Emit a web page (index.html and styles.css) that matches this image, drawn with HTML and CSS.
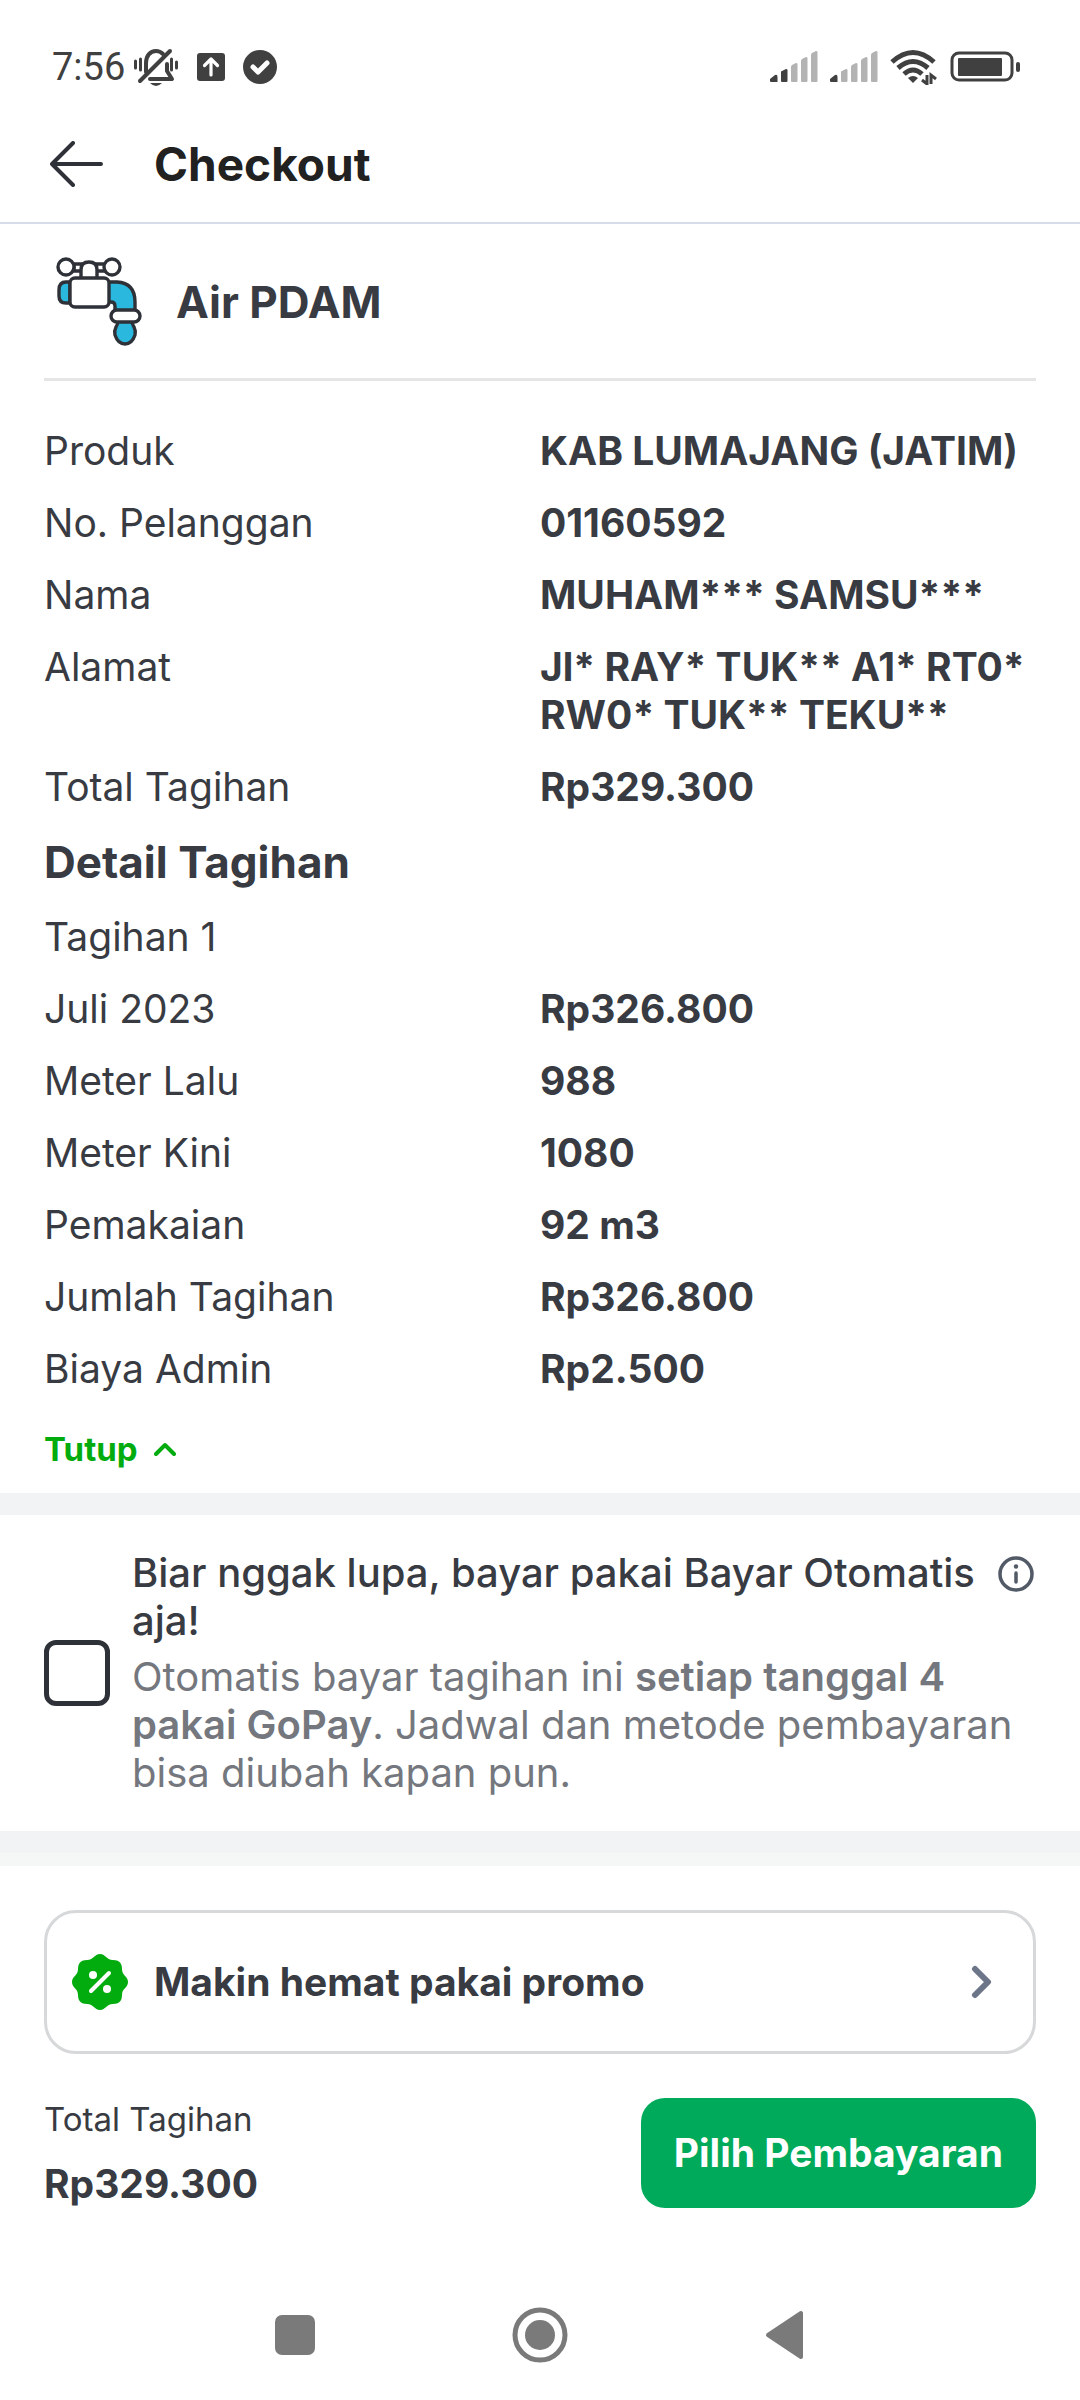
FILE: index.html
```html
<!DOCTYPE html>
<html lang="id">
<head>
<meta charset="UTF-8">
<meta name="viewport" content="width=device-width, initial-scale=1.0">
<title>Checkout</title>
<link rel="stylesheet" href="styles.css">
</head>
<body>

<div class="status-bar">
    <div class="status-left">
        <span class="clock">7:56</span>
        <!-- Muted bell -->
        <svg width="46" height="40" viewBox="0 0 46 40" fill="none" stroke="#404040" stroke-width="4" stroke-linecap="round">
            <path d="M13 25V16C13 9 17 4 23 4c3 0 5 1 7 3M34 17v7l5 8H17" stroke-linejoin="round"/>
            <path d="M7 34L37 4"/>
            <path d="M2.500 14v7M7.500 12v11M38.500 12v11M43.500 15v6" stroke-width="3"/>
            <path d="M17 36h12q-6 6-12 0z" fill="#404040" stroke="none"/>
        </svg>
        <svg width="28" height="28" viewBox="0 0 28 28">
            <rect width="28" height="28" rx="3" fill="#404040"/>
            <path d="M14 22V7M7.500 12.500L14 6l6.500 6.500" fill="none" stroke="#fff" stroke-width="3.200" stroke-linecap="round" stroke-linejoin="round"/>
        </svg>
        <svg width="34" height="34" viewBox="0 0 34 34">
            <circle cx="17" cy="17" r="17" fill="#404040"/>
            <path d="M10 17l5 5 9-9" fill="none" stroke="#fff" stroke-width="5" stroke-linecap="round" stroke-linejoin="round"/>
        </svg>
    </div>
    <div class="status-right">
        <svg width="48" height="32" viewBox="0 0 48 32" fill="#b3b3b3">
            <path d="M0 28l5-4q2.500-1 2.500 2v5H1q-1 0-1-1zM11 21q0-1 1-1l4-2q1.500 0 1.500 1v11q0 1-1 1H12q-1 0-1-1z" fill="#404040"/>
            <path d="M21 16q0-1 1-2l4-2q1.500 0 1.500 1v17q0 1-1 1H22q-1 0-1-1zM31 10q0-1 1-2l4-2q1.500 0 1.500 1v23q0 1-1 1H32q-1 0-1-1zM41 4q0-1 1-2l4-2q1.500 0 1.500 1v29q0 1-1 1H42q-1 0-1-1z"/>
        </svg>
        <svg width="48" height="32" viewBox="0 0 48 32" fill="#b3b3b3">
            <path d="M0 28l5-4q2.500-1 2.500 2v5H1q-1 0-1-1z" fill="#404040"/>
            <path d="M11 21q0-1 1-1l4-2q1.500 0 1.500 1v11q0 1-1 1H12q-1 0-1-1zM21 16q0-1 1-2l4-2q1.500 0 1.500 1v17q0 1-1 1H22q-1 0-1-1zM31 10q0-1 1-2l4-2q1.500 0 1.500 1v23q0 1-1 1H32q-1 0-1-1zM41 4q0-1 1-2l4-2q1.500 0 1.500 1v29q0 1-1 1H42q-1 0-1-1z"/>
        </svg>
        <svg width="48" height="36" viewBox="0 0 48 36" fill="none" stroke="#404040" stroke-width="5">
            <path d="M2 13Q23-6 44 13M8 19q15-13 30 0M14 25q9-8 18 0"/>
            <path d="M18 29q5-4 10 0l-5 5z" fill="#404040" stroke="none"/>
            <path d="M37 26v9l-5-4M41 35v-9l5 4" stroke-width="3"/>
        </svg>
        <svg width="70" height="32" viewBox="0 0 70 32">
            <rect x="2" y="2" width="60" height="27" rx="7" fill="none" stroke="#404040" stroke-width="3"/>
            <rect x="8" y="7" width="44" height="18" rx="1" fill="#404040"/>
            <rect x="66" y="11" width="4" height="10" rx="2" fill="#404040"/>
        </svg>
    </div>
</div>

<header class="topbar">
    <button class="back" type="button" aria-label="Kembali">
        <svg width="54" height="46" viewBox="0 0 54 46" fill="none" stroke="#2e3137" stroke-width="4" stroke-linecap="round" stroke-linejoin="round">
            <path d="M23 2L2 23l21 21M2 23h49"/>
        </svg>
    </button>
    <h1>Checkout</h1>
</header>

<main>
    <section class="bill">
        <div class="service">
            <!-- Water tap -->
            <svg width="88" height="90" viewBox="0 0 88 90" fill="#fff" stroke="#2e3137" stroke-width="3.400" stroke-linejoin="round">
                <path d="M18 7h12v7H18zM38 7h12v7H38z"/>
                <circle cx="10" cy="10" r="8"/>
                <circle cx="56" cy="10" r="8"/>
                <path d="M25 22v-9q0-8 8-8t8 8v9z"/>
                <path d="M14 25h-4q-7 0-7 8v6q0 7 7 7h4z" fill="#2bb8df"/>
                <path d="M52 25h9q18 1 18 20v9H59v-5q0-4-4-4h-3z" fill="#2bb8df"/>
                <rect x="14" y="21" width="39" height="29" rx="5"/>
                <path d="M62 64h14q0 3 2 6 2 4 1 8-3 9-10 9t-10-9q-1-4 1-8 2-3 2-6z" fill="#2bb8df"/>
                <rect x="55" y="53" width="29" height="12" rx="6"/>
            </svg>
            <h2>Air PDAM</h2>
        </div>

        <dl class="rows">
            <div class="row"><dt>Produk</dt><dd>KAB LUMAJANG (JATIM)</dd></div>
            <div class="row"><dt>No. Pelanggan</dt><dd>01160592</dd></div>
            <div class="row"><dt>Nama</dt><dd>MUHAM*** SAMSU***</dd></div>
            <div class="row"><dt>Alamat</dt><dd>Jl* RAY* TUK** A1* RT0* RW0* TUK** TEKU**</dd></div>
            <div class="row"><dt>Total Tagihan</dt><dd>Rp329.300</dd></div>
        </dl>

        <h2 class="detail-title">Detail Tagihan</h2>
        <p class="bill-name">Tagihan 1</p>

        <dl class="rows">
            <div class="row"><dt>Juli 2023</dt><dd>Rp326.800</dd></div>
            <div class="row"><dt>Meter Lalu</dt><dd>988</dd></div>
            <div class="row"><dt>Meter Kini</dt><dd>1080</dd></div>
            <div class="row"><dt>Pemakaian</dt><dd>92 m3</dd></div>
            <div class="row"><dt>Jumlah Tagihan</dt><dd>Rp326.800</dd></div>
            <div class="row"><dt>Biaya Admin</dt><dd>Rp2.500</dd></div>
        </dl>

        <button class="toggle" type="button">
            Tutup
            <svg width="22" height="14" viewBox="0 0 22 14" fill="none" stroke="#03ac0e" stroke-width="4" stroke-linecap="round" stroke-linejoin="round">
                <path d="M2 12l9-9 9 9"/>
            </svg>
        </button>
    </section>

    <section class="auto-pay">
        <input class="check" type="checkbox" id="autoPay">
        <div class="auto-text">
            <div class="auto-head">
                <label for="autoPay">Biar nggak lupa, bayar pakai Bayar Otomatis aja!</label>
                <button class="info" type="button" aria-label="Info">
                    <svg width="38" height="38" viewBox="0 0 38 38" fill="none" stroke="#525a67" stroke-width="3.500" stroke-linecap="round">
                        <circle cx="18" cy="19" r="16"/>
                        <path d="M18 18v9"/>
                        <circle cx="18" cy="11.500" r="2.200" fill="#525a67" stroke="none"/>
                    </svg>
                </button>
            </div>
            <p>Otomatis bayar tagihan ini <b>setiap tanggal 4 pakai GoPay</b>. Jadwal dan metode pembayaran bisa diubah kapan pun.</p>
        </div>
    </section>
</main>

<footer class="footer">
    <button class="promo" type="button">
        <svg width="56" height="56" viewBox="0 0 56 56">
            <path d="M28 0c6 0 6 6 13 6 6 0 9 3 9 9 0 7 6 7 6 13s-6 6-6 13c0 6-3 9-9 9-7 0-7 6-13 6s-6-6-13-6c-6 0-9-3-9-9 0-7-6-7-6-13s6-6 6-13c0-6 3-9 9-9 7 0 7-6 13-6z" fill="#03ac0e"/>
            <path d="M19 37l18-18" stroke="#fff" stroke-width="4" stroke-linecap="round"/>
            <circle cx="21" cy="21" r="4" fill="#fff"/>
            <circle cx="35" cy="35" r="4" fill="#fff"/>
        </svg>
        <span>Makin hemat pakai promo</span>
        <svg class="chevron" width="22" height="34" viewBox="0 0 22 34" fill="none" stroke="#6d7588" stroke-width="6" stroke-linecap="round" stroke-linejoin="round">
            <path d="M4 4l13 13L4 30"/>
        </svg>
    </button>

    <div class="pay">
        <div class="total">
            <span>Total Tagihan</span>
            <strong>Rp329.300</strong>
        </div>
        <button class="pay-button" type="button">Pilih Pembayaran</button>
    </div>
</footer>

<nav class="nav-bar">
    <button type="button" aria-label="Aplikasi terbaru">
        <svg width="56" height="56" viewBox="0 0 56 56"><rect x="8" y="8" width="40" height="40" rx="7" fill="#7a7a7a"/></svg>
    </button>
    <button type="button" aria-label="Beranda">
        <svg width="56" height="56" viewBox="0 0 56 56">
            <circle cx="28" cy="28" r="25" fill="none" stroke="#7a7a7a" stroke-width="5"/>
            <circle cx="28" cy="28" r="15" fill="#7a7a7a"/>
        </svg>
    </button>
    <button type="button" aria-label="Kembali">
        <svg width="56" height="56" viewBox="0 0 56 56"><path d="M11 28L44 6v44z" fill="#7a7a7a" stroke="#7a7a7a" stroke-width="4" stroke-linejoin="round"/></svg>
    </button>
</nav>

</body>
</html>
```
FILE: styles.css
```css
* {
    box-sizing: border-box;
}

body {
    margin: 0;
    background-color: #ffffff;
    color: #383b42;
    font-family: Inter, "Liberation Sans", sans-serif;
    font-size: 39px;
    line-height: 48px;
}

h1, h2, p, dl, dd {
    margin: 0;
}

button {
    padding: 0;
    border: none;
    background: none;
    color: inherit;
    font: inherit;
    cursor: pointer;
}

svg {
    display: block;
    flex-shrink: 0;
}

/* Phone status bar */
.status-bar {
    display: flex;
    justify-content: space-between;
    align-items: center;
    padding: 40px 60px 0 52px;
    color: #404040;
}

.status-left, .status-right {
    display: flex;
    align-items: center;
}

.status-left {
    gap: 18px;
}

.status-right {
    gap: 12px;
}

.clock {
    margin-right: -10px;
    font-family: Roboto, sans-serif;
    font-size: 38px;
    line-height: 54px;
}

.topbar {
    display: flex;
    align-items: center;
    gap: 50px;
    height: 130px;
    padding: 12px 50px 0;
    border-bottom: 2px solid #d6dce8;
}

h1, h2 {
    font-size: 44px;
    font-weight: 700;
    line-height: 54px;
}

h1 {
    color: #212121;
    font-size: 46px;
}

/* Bill details */
.bill {
    padding: 0 44px 22px;
    border-bottom: 22px solid #f2f3f5;
}

.service {
    display: flex;
    align-items: center;
    gap: 32px;
    margin-bottom: 46px;
    padding: 33px 12px 31px;
    border-bottom: 3px solid #e5e5e5;
}

.rows {
    display: flex;
    flex-direction: column;
    gap: 24px;
}

.row {
    display: grid;
    grid-template-columns: 1fr 1fr;
}

.row dd {
    font-weight: 700;
}

.detail-title, .bill-name {
    margin: 24px 0;
}

.toggle {
    display: flex;
    align-items: center;
    gap: 16px;
    margin-top: 34px;
    color: #03ac0e;
    font-size: 33px;
    font-weight: 700;
    line-height: 44px;
}

/* Auto payment */
.auto-pay {
    display: flex;
    align-items: center;
    gap: 22px;
    padding: 34px 44px;
    border-bottom: 22px solid #f2f3f5;
}

.check {
    flex-shrink: 0;
    width: 66px;
    height: 66px;
    margin: 0;
    border: 5px solid #2e3137;
    border-radius: 12px;
    background-color: #ffffff;
    appearance: none;
}

.check:checked {
    background-color: #03ac0e;
}

.auto-text {
    flex: 1;
    font-size: 40px;
}

.auto-head {
    display: flex;
    align-items: flex-start;
    justify-content: space-between;
    gap: 12px;
    margin-bottom: 8px;
    font-weight: 500;
}

.info {
    padding-top: 6px;
}

.auto-text p {
    color: #74777d;
}

.auto-text b {
    font-weight: 600;
}

/* Footer */
.footer {
    padding: 44px;
    border-top: 13px solid #f5f7f7;
}

.promo {
    display: flex;
    align-items: center;
    gap: 26px;
    width: 100%;
    height: 144px;
    padding: 0 40px 0 25px;
    border: 3px solid #d6d8d9;
    border-radius: 32px;
    font-weight: 700;
}

.chevron {
    margin-left: auto;
}

.pay {
    display: flex;
    align-items: center;
    justify-content: space-between;
    margin-top: 44px;
}

.total {
    display: flex;
    flex-direction: column;
    gap: 20px;
}

.total span {
    font-size: 33px;
    line-height: 42px;
}

.pay-button {
    height: 110px;
    padding: 0 33px;
    border-radius: 24px;
    background-color: #00aa5b;
    color: #ffffff;
    font-weight: 700;
}

.nav-bar {
    display: flex;
    justify-content: space-around;
    padding: 55px 172px 37px;
}
```
